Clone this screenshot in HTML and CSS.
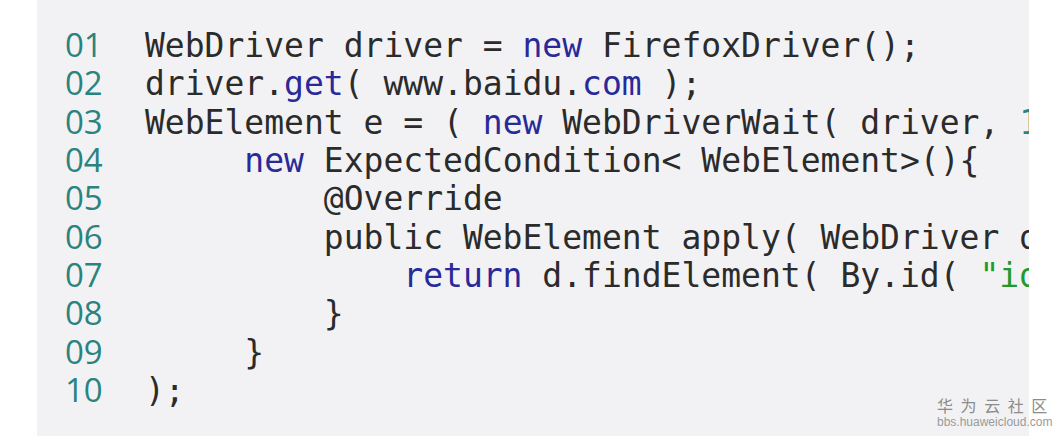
FILE: index.html
```html
<!DOCTYPE html>
<html lang="zh">
<head>
<meta charset="utf-8">
<title>Code</title>
<link rel="stylesheet" href="styles.css">
</head>
<body>
<div class="page">
  <div class="panel">
    <div class="line"><span class="num">01</span><span class="code">WebDriver driver = <span class="kw">new</span> FirefoxDriver();</span></div>
    <div class="line"><span class="num">02</span><span class="code">driver.<span class="kw">get</span>( www.baidu.<span class="kw">com</span> );</span></div>
    <div class="line"><span class="num">03</span><span class="code">WebElement e = ( <span class="kw">new</span> WebDriverWait( driver, <span class="lit">10</span> )).until(</span></div>
    <div class="line"><span class="num">04</span><span class="code">     <span class="kw">new</span> ExpectedCondition&lt; WebElement&gt;(){</span></div>
    <div class="line"><span class="num">05</span><span class="code">         @Override</span></div>
    <div class="line"><span class="num">06</span><span class="code">         public WebElement apply( WebDriver d ) {</span></div>
    <div class="line"><span class="num">07</span><span class="code">             <span class="kw">return</span> d.findElement( By.id( <span class="str">"id"</span> ));</span></div>
    <div class="line"><span class="num">08</span><span class="code">         }</span></div>
    <div class="line"><span class="num">09</span><span class="code">     }</span></div>
    <div class="line"><span class="num">10</span><span class="code">);</span></div>
  </div>
  <div class="watermark">
    <div class="wm-cn">华 为 云 社 区</div>
    <div class="wm-url">bbs.huaweicloud.com</div>
  </div>
</div>
</body>
</html>
```

FILE: styles.css
```css
html, body {
  margin: 0;
  padding: 0;
  background: #ffffff;
}

.page {
  position: relative;
  width: 1059px;
  height: 436px;
  overflow: hidden;
  display: flex;
}

.panel {
  margin-left: 37px;
  width: 992px;
  height: 436px;
  box-sizing: border-box;
  padding: 26px 0 0 28px;
  background: #f2f2f4;
  overflow: hidden;
}

.line {
  display: flex;
  align-items: baseline;
  height: 38.33px;
  white-space: pre;
}

.num {
  flex: 0 0 80px;
  font-family: "Open Sans", "Noto Sans", sans-serif;
  font-size: 33px;
  line-height: 38.33px;
  color: #2a837e;
}

.code {
  font-family: "DejaVu Sans Mono", monospace;
  font-size: 33px;
  line-height: 38.33px;
  color: #2b2b2b;
}

.kw {
  color: #29299a;
}

.lit {
  color: #2a837e;
}

.str {
  color: #1f9a2c;
}

.watermark {
  position: absolute;
  left: 937px;
  top: 395px;
  width: 116px;
}

.wm-cn {
  font-family: "Noto Sans CJK SC", sans-serif;
  font-size: 16px;
  line-height: 21px;
  letter-spacing: 2px;
  color: #8c8c8c;
  white-space: nowrap;
}

.wm-url {
  font-family: "Liberation Sans", Arial, sans-serif;
  font-size: 12px;
  line-height: 13px;
  color: #9a9a9a;
  white-space: nowrap;
}
```
